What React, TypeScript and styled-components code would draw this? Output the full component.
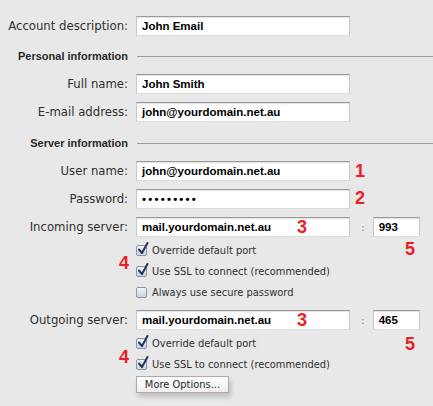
import React from "react";
import styled, { createGlobalStyle } from "styled-components";

const Global = createGlobalStyle`
  html, body { margin: 0; padding: 0; background: #e8e8e8; }
  body { font-family: "DejaVu Sans", "Liberation Sans", sans-serif; }
`;

const Page = styled.div`
  position: relative;
  width: 433px;
  height: 406px;
  box-sizing: border-box;
  padding-top: 16px;
  background: #e8e8e8;
  overflow: hidden;
`;

const Row = styled.div<{ $mt?: number }>`
  display: grid;
  grid-template-columns: 128px 214px 1fr;
  column-gap: 8px;
  align-items: center;
  height: 20px;
  margin-top: ${(p) => p.$mt ?? 8}px;
`;

const Label = styled.div`
  text-align: right;
  font-family: "DejaVu Sans", sans-serif;
  font-size: 11.7px;
  color: #2f2f2f;
  white-space: nowrap;
`;

const Field = styled.div<{ $w?: number; $secret?: boolean }>`
  box-sizing: border-box;
  height: 20px;
  width: ${(p) => (p.$w ? `${p.$w}px` : "100%")};
  background: #fff;
  border: 1px solid #c9c9c9;
  border-top-color: #9a9a9a;
  border-bottom-color: #dcdcdc;
  box-shadow: inset 0 1px 1px rgba(0, 0, 0, 0.12);
  padding: 0 5px;
  font-family: "Liberation Sans", Arial, sans-serif;
  font-weight: bold;
  font-size: 11.5px;
  letter-spacing: ${(p) => (p.$secret ? "2.2px" : "0")};
  line-height: 18px;
  color: #000;
  white-space: nowrap;
  overflow: hidden;
`;

const PortWrap = styled.div`
  display: flex;
  align-items: center;
  gap: 8px;
  padding-left: 3px;
`;

const Colon = styled.span`
  color: #8a8a8a;
  font-size: 11px;
`;

const SectionRow = styled.div<{ $mt: number }>`
  display: grid;
  grid-template-columns: 128px 1fr;
  column-gap: 9px;
  align-items: center;
  height: 14px;
  margin-top: ${(p) => p.$mt}px;
`;

const SectionTitle = styled.div`
  text-align: right;
  font-family: "Liberation Sans", Arial, sans-serif;
  font-size: 11px;
  font-weight: bold;
  color: #2a2a2a;
  white-space: nowrap;
`;

const Rule = styled.div`
  height: 0;
  border-top: 1px solid #9c9c9c;
`;

const Options = styled.div<{ $mt: number }>`
  display: flex;
  flex-direction: column;
  align-items: flex-start;
  padding-left: 136px;
  margin-top: ${(p) => p.$mt}px;
`;

const CheckRow = styled.div`
  display: flex;
  align-items: center;
  gap: 5px;
  height: 21px;
  font-family: "DejaVu Sans Condensed", "Liberation Sans", sans-serif;
  font-stretch: condensed;
  font-size: 11px;
  color: #2f2f2f;
  white-space: nowrap;
`;

const Box = styled.span`
  position: relative;
  box-sizing: border-box;
  width: 11px;
  height: 11px;
  border: 1px solid #8d97a6;
  border-radius: 2px;
  background: linear-gradient(#f4f6f9, #c9d2de);
  flex: none;
`;

const Tick = styled.svg`
  position: absolute;
  left: 0px;
  top: -4px;
  width: 12px;
  height: 13px;
  overflow: visible;
`;

const Button = styled.div`
  box-sizing: border-box;
  width: 93px;
  height: 17px;
  margin-top: 1px;
  border: 1px solid #b6a6a6;
  background: linear-gradient(#ffffff, #eeeeee);
  box-shadow: 2px 4px 5px rgba(0, 0, 0, 0.18);
  font-family: "DejaVu Sans Condensed", "Liberation Sans", sans-serif;
  font-stretch: condensed;
  font-size: 11px;
  line-height: 15px;
  color: #2a2a2a;
  text-align: center;
  white-space: nowrap;
`;

const Mark = styled.span<{ $x: number; $y: number }>`
  position: absolute;
  left: ${(p) => p.$x}px;
  top: ${(p) => p.$y}px;
  font-family: "Liberation Sans", Arial, sans-serif;
  font-weight: bold;
  font-size: 18px;
  line-height: 18px;
  color: #ee1c25;
`;

const Check = ({ on, children }: { on: boolean; children: React.ReactNode }) => (
  <CheckRow>
    <Box>
      {on && (
        <Tick viewBox="0 0 12 13">
          <path d="M2 7.5 L5 11 L10.5 1" fill="none" stroke="#1f3560" strokeWidth="2" strokeLinecap="round" strokeLinejoin="round" />
        </Tick>
      )}
    </Box>
    <span>{children}</span>
  </CheckRow>
);

export default function App() {
  return (
    <>
      <Global />
      <Page>
        <Row $mt={0}>
          <Label>Account description:</Label>
          <Field>John Email</Field>
        </Row>

        <SectionRow $mt={13}>
          <SectionTitle>Personal information</SectionTitle>
          <Rule />
        </SectionRow>

        <Row $mt={11}>
          <Label>Full name:</Label>
          <Field>John Smith</Field>
        </Row>
        <Row>
          <Label>E-mail address:</Label>
          <Field>john@yourdomain.net.au</Field>
        </Row>

        <SectionRow $mt={14}>
          <SectionTitle>Server information</SectionTitle>
          <Rule />
        </SectionRow>

        <Row $mt={11}>
          <Label>User name:</Label>
          <Field>john@yourdomain.net.au</Field>
        </Row>
        <Row>
          <Label>Password:</Label>
          <Field $secret>•••••••••</Field>
        </Row>
        <Row>
          <Label>Incoming server:</Label>
          <Field>mail.yourdomain.net.au</Field>
          <PortWrap>
            <Colon>:</Colon>
            <Field $w={47}>993</Field>
          </PortWrap>
        </Row>

        <Options $mt={3}>
          <Check on>Override default port</Check>
          <Check on>Use SSL to connect (recommended)</Check>
          <Check on={false}>Always use secure password</Check>
        </Options>

        <Row $mt={7}>
          <Label>Outgoing server:</Label>
          <Field>mail.yourdomain.net.au</Field>
          <PortWrap>
            <Colon>:</Colon>
            <Field $w={47}>465</Field>
          </PortWrap>
        </Row>

        <Options $mt={3}>
          <Check on>Override default port</Check>
          <Check on>Use SSL to connect (recommended)</Check>
          <Button>More Options...</Button>
        </Options>

        <Mark $x={355} $y={162}>1</Mark>
        <Mark $x={355} $y={189}>2</Mark>
        <Mark $x={297} $y={218}>3</Mark>
        <Mark $x={405} $y={240}>5</Mark>
        <Mark $x={119} $y={254}>4</Mark>
        <Mark $x={297} $y={311}>3</Mark>
        <Mark $x={405} $y={335}>5</Mark>
        <Mark $x={119} $y={348}>4</Mark>
      </Page>
    </>
  );
}
